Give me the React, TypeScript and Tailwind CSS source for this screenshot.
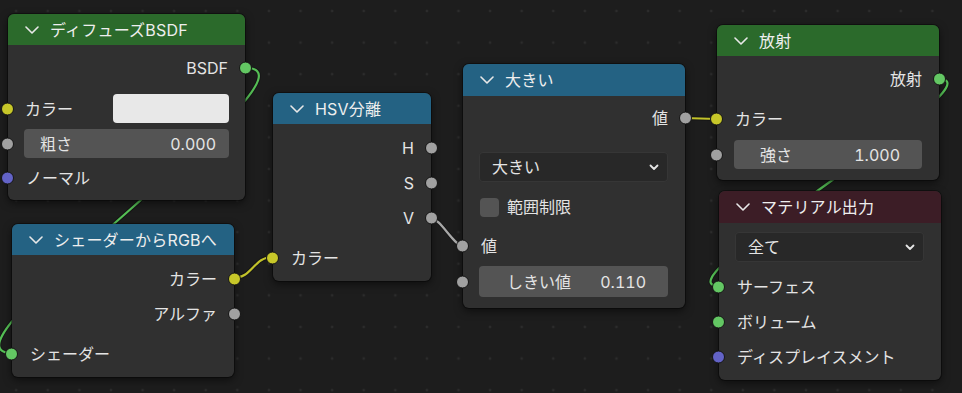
import React from "react";

const FONT = "font-['Inter','Noto_Sans_CJK_JP',sans-serif]";

type SockColor = "green" | "yellow" | "gray" | "purple";
const sockClass: Record<SockColor, string> = {
  green: "bg-[#63c763]",
  yellow: "bg-[#c7c729]",
  gray: "bg-[#a1a1a1]",
  purple: "bg-[#6363c7]",
};

function Socket({ color, side }: { color: SockColor; side: "left" | "right" }) {
  return (
    <span
      className={`absolute top-1/2 -translate-y-1/2 w-[13px] h-[13px] rounded-full border border-[#151515] ${sockClass[color]} ${
        side === "left" ? "-left-[7px]" : "-right-[7px]"
      }`}
    />
  );
}

function Chevron({ small }: { small?: boolean }) {
  return small ? (
    <svg width="10" height="7" viewBox="0 0 10 7" className="shrink-0">
      <path d="M1.5 1.5 L5 5 L8.5 1.5" fill="none" stroke="#e6e6e6" strokeWidth="1.8" strokeLinecap="round" strokeLinejoin="round" />
    </svg>
  ) : (
    <svg width="14" height="8" viewBox="0 0 14 8" className="shrink-0">
      <path d="M1 1 L7 7 L13 1" fill="none" stroke="#e8e8e8" strokeWidth="1.6" strokeLinecap="round" strokeLinejoin="round" />
    </svg>
  );
}

function Header({ title, color, h }: { title: string; color: string; h: string }) {
  return (
    <div className={`${color} ${h} rounded-t-[6px] flex items-center pl-[17px] gap-[11px] text-[16px] text-[#eeeeee]`}>
      <Chevron />
      <span className="leading-none tracking-[0.2px]">{title}</span>
    </div>
  );
}

function OutRow({ label, color, h = "h-[35px]" }: { label: string; color: SockColor; h?: string }) {
  return (
    <div className={`relative ${h} flex items-center justify-end pr-[17px]`}>
      <span>{label}</span>
      <Socket color={color} side="right" />
    </div>
  );
}

function InRow({ label, color, h = "h-[35px]" }: { label: string; color: SockColor; h?: string }) {
  return (
    <div className={`relative ${h} flex items-center pl-[18px]`}>
      <span>{label}</span>
      <Socket color={color} side="left" />
    </div>
  );
}

const nodeBase =
  "absolute rounded-[6px] bg-[#303030] shadow-[0_0_0_1px_rgba(0,0,0,0.35),0_3px_9px_rgba(0,0,0,0.55)] text-[16px] text-[#e4e4e4] leading-none tabular-nums";

export default function App() {
  return (
    <div
      className={`relative w-[962px] h-[393px] overflow-hidden bg-[#1d1d1d] bg-[radial-gradient(circle,#2c2c2c_1.1px,transparent_1.7px)] bg-[length:31.6px_31.6px] bg-[position:0.4px_-4.8px] ${FONT}`}
    >
      {/* links */}
      <svg className="absolute inset-0" width="962" height="393" viewBox="0 0 962 393">
        <g fill="none" strokeLinecap="round">
          <path d="M246,68 C336,68 -78,353 12,353" stroke="#161616" strokeWidth="4" />
          <path d="M246,68 C336,68 -78,353 12,353" stroke="#55bf55" strokeWidth="2.2" />
          <path d="M939,79 C1006,79 652,286 719,286" stroke="#161616" strokeWidth="4" />
          <path d="M939,79 C1006,79 652,286 719,286" stroke="#55bf55" strokeWidth="2.2" />
          <path d="M233,278 C253,278 253,257 273,257" stroke="#161616" strokeWidth="4" />
          <path d="M233,278 C253,278 253,257 273,257" stroke="#c2c22a" strokeWidth="2.2" />
          <path d="M431,218 C440,218 454,246 463,246" stroke="#161616" strokeWidth="4" />
          <path d="M431,218 C440,218 454,246 463,246" stroke="#a8a8a8" strokeWidth="2.2" />
          <path d="M684,118 L717,119" stroke="#161616" strokeWidth="4" />
          <path d="M684,118 L717,119" stroke="#c2c22a" strokeWidth="2.2" />
        </g>
      </svg>

      {/* Diffuse BSDF */}
      <div className={`${nodeBase} left-[8px] top-[14px] w-[237px]`}>
        <Header title="ディフューズBSDF" color="bg-[#2b6a2b]" h="h-[31px]" />
        <div className="flex flex-col pt-[6px] pb-[7px]">
          <OutRow label="BSDF" color="green" h="h-[34px]" />
          <div className="h-[9px]" />
          <div className="relative h-[29px] flex items-center pl-[17px] pr-[16px]">
            <span className="flex-1">カラー</span>
            <div className="w-[116px] h-full rounded-[4px] bg-[#e8e8e8]" />
            <Socket color="yellow" side="left" />
          </div>
          <div className="h-[6px]" />
          <div className="relative h-[29px] px-[16px]">
            <div className="h-full rounded-[4px] bg-[#545454] flex items-center justify-between pl-[16px] pr-[13px]">
              <span>粗さ</span>
              <span>0.000</span>
            </div>
            <Socket color="gray" side="left" />
          </div>
          <div className="h-[5px]" />
          <InRow label="ノーマル" color="purple" h="h-[30px]" />
        </div>
      </div>

      {/* Shader to RGB */}
      <div className={`${nodeBase} left-[12px] top-[224px] w-[222px]`}>
        <Header title="シェーダーからRGBへ" color="bg-[#246283]" h="h-[31px]" />
        <div className="flex flex-col pt-[6px] pb-[6px]">
          <OutRow label="カラー" color="yellow" />
          <OutRow label="アルファ" color="gray" />
          <div className="h-[5px]" />
          <InRow label="シェーダー" color="green" />
        </div>
      </div>

      {/* HSV separate */}
      <div className={`${nodeBase} left-[273px] top-[93px] w-[158px]`}>
        <Header title="HSV分離" color="bg-[#246283]" h="h-[31px]" />
        <div className="flex flex-col pt-[6px] pb-[6px]">
          <OutRow label="H" color="gray" />
          <OutRow label="S" color="gray" />
          <OutRow label="V" color="gray" />
          <div className="h-[5px]" />
          <InRow label="カラー" color="yellow" />
        </div>
      </div>

      {/* Math greater than */}
      <div className={`${nodeBase} left-[463px] top-[64px] w-[222px]`}>
        <Header title="大きい" color="bg-[#246283]" h="h-[32px]" />
        <div className="flex flex-col pt-[5px] pb-[11px]">
          <OutRow label="値" color="gray" h="h-[34px]" />
          <div className="h-[17px]" />
          <div className="h-[30px] pl-[16px] pr-[17px]">
            <div className="h-full rounded-[4px] bg-[#282828] shadow-[inset_0_0_0_1px_#363636] flex items-center justify-between pl-[13px] pr-[9px]">
              <span>大きい</span>
              <Chevron small />
            </div>
          </div>
          <div className="h-[10px]" />
          <div className="h-[30px] flex items-center gap-[8px] pl-[17px]">
            <div className="w-[19px] h-[19px] rounded-[4px] bg-[#545454]" />
            <span>範囲制限</span>
          </div>
          <div className="h-[7px]" />
          <InRow label="値" color="gray" h="h-[34px]" />
          <div className="h-[3px]" />
          <div className="relative h-[31px] pl-[16px] pr-[17px]">
            <div className="h-full rounded-[4px] bg-[#545454] flex items-center justify-between pl-[28px] pr-[22px]">
              <span>しきい値</span>
              <span>0.110</span>
            </div>
            <Socket color="gray" side="left" />
          </div>
        </div>
      </div>

      {/* Emission */}
      <div className={`${nodeBase} left-[717px] top-[25px] w-[222px]`}>
        <Header title="放射" color="bg-[#2b6a2b]" h="h-[31px]" />
        <div className="flex flex-col pt-[6px] pb-[11px]">
          <OutRow label="放射" color="green" h="h-[34px]" />
          <div className="h-[6px]" />
          <InRow label="カラー" color="yellow" h="h-[34px]" />
          <div className="h-[4px]" />
          <div className="relative h-[29px] pl-[17px] pr-[17px]">
            <div className="h-full rounded-[4px] bg-[#545454] flex items-center justify-between pl-[26px] pr-[22px]">
              <span>強さ</span>
              <span>1.000</span>
            </div>
            <Socket color="gray" side="left" />
          </div>
        </div>
      </div>

      {/* Material Output */}
      <div className={`${nodeBase} left-[719px] top-[191px] w-[222px]`}>
        <Header title="マテリアル出力" color="bg-[#3c1d26]" h="h-[32px]" />
        <div className="flex flex-col pt-[9px] pb-[6px]">
          <div className="h-[30px] pl-[16px] pr-[17px]">
            <div className="h-full rounded-[4px] bg-[#282828] shadow-[inset_0_0_0_1px_#363636] flex items-center justify-between pl-[13px] pr-[9px]">
              <span>全て</span>
              <Chevron small />
            </div>
          </div>
          <div className="h-[7px]" />
          <InRow label="サーフェス" color="green" />
          <InRow label="ボリューム" color="green" />
          <InRow label="ディスプレイスメント" color="purple" />
        </div>
      </div>
    </div>
  );
}
